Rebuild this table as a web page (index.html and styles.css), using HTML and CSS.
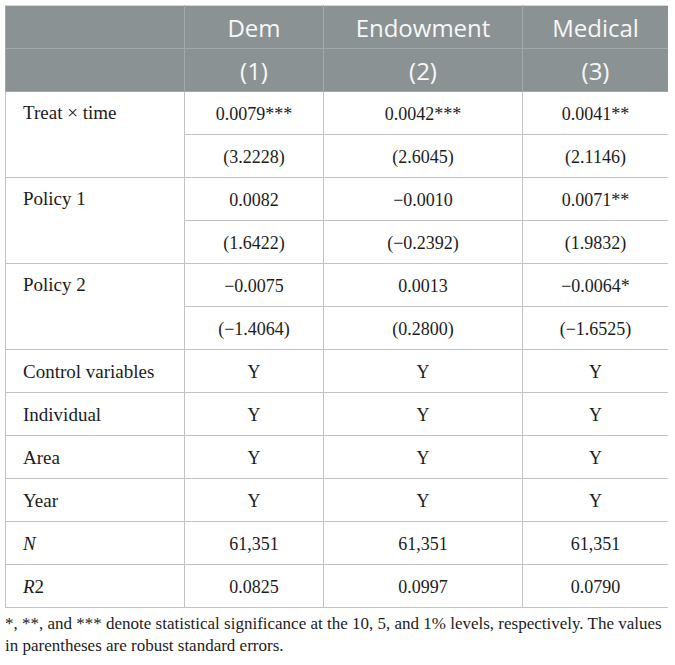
FILE: index.html
```html
<!DOCTYPE html>
<html lang="en">

<head>
    <meta charset="UTF-8">
    <meta name="viewport" content="width=device-width, initial-scale=1.0">
    <title>Regression Results</title>
    <link rel="stylesheet" href="styles.css">
</head>

<body>

    <table class="results">
        <colgroup>
            <col class="col-label">
            <col class="col-dem">
            <col class="col-endow">
            <col class="col-med">
        </colgroup>
        <thead>
            <tr>
                <th></th>
                <th>Dem</th>
                <th>Endowment</th>
                <th>Medical</th>
            </tr>
            <tr>
                <th></th>
                <th>(1)</th>
                <th>(2)</th>
                <th>(3)</th>
            </tr>
        </thead>
        <tbody>
            <tr>
                <td class="label" rowspan="2">Treat &times; time</td>
                <td>0.0079***</td>
                <td>0.0042***</td>
                <td>0.0041**</td>
            </tr>
            <tr>
                <td>(3.2228)</td>
                <td>(2.6045)</td>
                <td>(2.1146)</td>
            </tr>
            <tr>
                <td class="label" rowspan="2">Policy 1</td>
                <td>0.0082</td>
                <td>&minus;0.0010</td>
                <td>0.0071**</td>
            </tr>
            <tr>
                <td>(1.6422)</td>
                <td>(&minus;0.2392)</td>
                <td>(1.9832)</td>
            </tr>
            <tr>
                <td class="label" rowspan="2">Policy 2</td>
                <td>&minus;0.0075</td>
                <td>0.0013</td>
                <td>&minus;0.0064*</td>
            </tr>
            <tr>
                <td>(&minus;1.4064)</td>
                <td>(0.2800)</td>
                <td>(&minus;1.6525)</td>
            </tr>
            <tr>
                <td class="label">Control variables</td>
                <td>Y</td>
                <td>Y</td>
                <td>Y</td>
            </tr>
            <tr>
                <td class="label">Individual</td>
                <td>Y</td>
                <td>Y</td>
                <td>Y</td>
            </tr>
            <tr>
                <td class="label">Area</td>
                <td>Y</td>
                <td>Y</td>
                <td>Y</td>
            </tr>
            <tr>
                <td class="label">Year</td>
                <td>Y</td>
                <td>Y</td>
                <td>Y</td>
            </tr>
            <tr>
                <td class="label"><i>N</i></td>
                <td>61,351</td>
                <td>61,351</td>
                <td>61,351</td>
            </tr>
            <tr>
                <td class="label"><i>R</i>2</td>
                <td>0.0825</td>
                <td>0.0997</td>
                <td>0.0790</td>
            </tr>
        </tbody>
    </table>

    <p class="note">*, **, and *** denote statistical significance at the 10, 5, and 1% levels, respectively. The values in parentheses are robust standard errors.</p>

</body>

</html>
```

FILE: styles.css
```css
body {
    margin: 5px 7px 5px 5px;
    background: #fff;
    font-family: "Liberation Serif", "Times New Roman", serif;
    color: #1c1c1c;
}

.results {
    width: 663px;
    border-collapse: collapse;
    table-layout: fixed;
}

.col-label {
    width: 179px;
}

.col-dem {
    width: 139px;
}

.col-endow {
    width: 199px;
}

.col-med {
    width: 146px;
}

th,
td {
    height: 42px;
    padding: 0 6px;
    border: 1px solid #c2c2c2;
    text-align: center;
    vertical-align: middle;
}

th {
    background-color: #8b9294;
    border-color: #a3a8aa;
    color: #f7f7f7;
    font-family: "Open Sans", "Noto Sans", sans-serif;
    font-weight: normal;
    font-size: 24px;
}

thead tr:first-child th {
    border-top-color: #d8d8d8;
}

td {
    font-size: 18px;
    height: 39px;
    padding-top: 3px;
}

/* row labels sit at the top of their two-line block */
td.label {
    text-align: left;
    padding: 3px 0 0 17px;
    vertical-align: top;
    line-height: 38px;
    font-size: 19px;
}

td.label[rowspan] {
    padding-top: 2px;
}

.note {
    margin: 5px 0 0;
    font-size: 17px;
    line-height: 22px;
}
```
